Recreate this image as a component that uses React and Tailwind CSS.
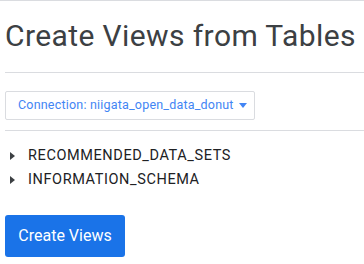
import React from "react";

const schemas = ["RECOMMENDED_DATA_SETS", "INFORMATION_SCHEMA"];

const App = () => {
  return (
    <div className="w-[364px] h-[264px] bg-white overflow-hidden border-t border-[#dadce0] font-['Roboto',sans-serif]">
      {/* Header */}
      <div className="ml-[5px] pt-[15px] pb-[16px] border-b border-[#dadce0]">
        <h1 className="text-[30px] leading-[40px] tracking-[0.4px] text-[#3c4043] whitespace-nowrap">Create Views from Tables</h1>
      </div>

      {/* Connection picker */}
      <div className="ml-[5px] pt-[18px] pb-[10px] border-b border-[#dadce0]">
        <button className="flex items-center gap-[5px] w-[250px] h-[29px] pl-[12px] border border-[#dadce0] rounded-[2px] text-[12.5px] tracking-[0.2px] text-[#4285f4]">
          Connection: niigata_open_data_donut
          <svg width="8" height="5" viewBox="0 0 8 5" className="fill-[#4285f4]">
            <path d="M0 0h8L4 5z" />
          </svg>
        </button>
      </div>

      {/* Schemas */}
      <ul className="pt-[13px] pl-[10px]">
        {schemas.map((s) => (
          <li key={s} className="flex items-center h-[24px] text-[14.5px] tracking-[0.6px] text-[#202124]">
            <svg width="5" height="8" viewBox="0 0 5 8" className="fill-[#3c4043] mr-[13px]">
              <path d="M0 0v8l5-4z" />
            </svg>
            {s}
          </li>
        ))}
      </ul>

      <div className="pl-[5px] pt-[23px]">
        <button className="w-[120px] h-[42px] bg-[#1a73e8] text-white text-[16px] rounded-[3px]">Create Views</button>
      </div>
    </div>
  );
};

export default App;
